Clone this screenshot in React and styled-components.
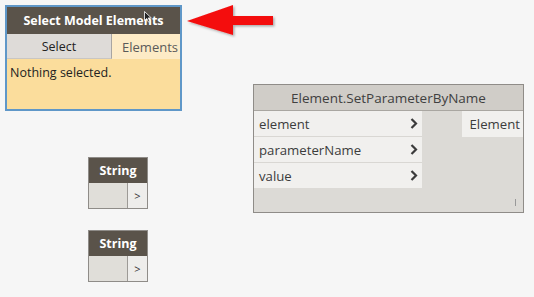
import React from "react";
import styled, { createGlobalStyle } from "styled-components";

const GlobalStyle = createGlobalStyle`
  html, body {
    margin: 0;
    padding: 0;
    background: #f6f6f6;
    font-family: "Open Sans", "Noto Sans", sans-serif;
  }
`;

// the workspace is a free canvas: nodes sit at their own coordinates
const Canvas = styled.div`
  position: relative;
  width: 534px;
  height: 297px;
  overflow: hidden;
  background: #f6f6f6;
`;

const Node = styled.div`
  position: absolute;
  left: ${(p) => p.x}px;
  top: ${(p) => p.y}px;
  width: ${(p) => p.w}px;
  display: flex;
  flex-direction: column;
  box-sizing: border-box;
  border: ${(p) => (p.selected ? "2px solid #5f97c8" : "1px solid #8f8c88")};
`;

const Header = styled.div`
  height: ${(p) => p.h || 26}px;
  display: flex;
  align-items: center;
  justify-content: center;
  background: ${(p) => (p.light ? "#d0cdc8" : "#5a534a")};
  color: ${(p) => (p.light ? "#404040" : "#ffffff")};
  font-weight: ${(p) => (p.light ? 400 : 700)};
  font-size: ${(p) => (p.light ? 13.5 : 12.5)}px;
  border-bottom: ${(p) => (p.light ? "1px solid #a9a6a1" : "none")};
  white-space: nowrap;
`;

/* ---- Select Model Elements ---- */

const ButtonRow = styled.div`
  display: flex;
  height: 25px;
`;

const SelectButton = styled.div`
  width: 105px;
  display: flex;
  align-items: center;
  justify-content: center;
  background: #dedbd8;
  border-right: 1px solid #a8a5a2;
  border-bottom: 1px solid #c9c6c2;
  font-size: 12.5px;
  color: #222;
  box-sizing: border-box;
`;

const OutLabel = styled.div`
  flex: 1;
  display: flex;
  align-items: center;
  justify-content: flex-end;
  padding-right: 2px;
  background: #fdebc6;
  color: #5a5a5a;
  font-size: 13px;
`;

const YellowBody = styled.div`
  height: 50px;
  background: #fbdd9c;
  padding: 5px 3px;
  box-sizing: border-box;
  font-size: 12.5px;
  color: #222;
`;

const Cursor = styled.svg`
  position: absolute;
  left: 144px;
  top: 11px;
`;

/* ---- Element.SetParameterByName ---- */

const NodeBody = styled.div`
  display: flex;
  background: #dcdad6;
  height: 101px;
  position: relative;
`;

const Inputs = styled.div`
  width: 168px;
  display: flex;
  flex-direction: column;
`;

const Port = styled.div`
  height: 25px;
  display: flex;
  align-items: center;
  justify-content: space-between;
  padding: 0 4px 0 5px;
  background: #f1f0ee;
  border-bottom: ${(p) => (p.last ? "none" : "1px solid #d9d7d3")};
  font-size: 13.2px;
  color: #3c3c3c;
`;

const Outputs = styled.div`
  flex: 1;
  display: flex;
  justify-content: flex-end;
  align-items: flex-start;
`;

const OutPort = styled.div`
  width: 61px;
  height: 26px;
  display: flex;
  align-items: center;
  justify-content: flex-end;
  padding-right: 3px;
  background: #f1f0ee;
  font-size: 13.2px;
  color: #3c3c3c;
  box-sizing: border-box;
`;

const Tick = styled.div`
  position: absolute;
  right: 7px;
  bottom: 6px;
  width: 1px;
  height: 7px;
  background: #999;
`;

/* ---- String nodes ---- */

const StringRow = styled.div`
  display: flex;
  height: 25px;
  background: #dcdad6;
`;

const StringInput = styled.div`
  flex: 1;
  background: #e0ded9;
  border-right: 1px solid #9d9a96;
`;

const StringOut = styled.div`
  width: 19px;
  display: flex;
  align-items: center;
  justify-content: center;
  background: #eeedeb;
  font-size: 11px;
  color: #333;
`;

const Arrow = styled.svg`
  position: absolute;
  left: 186px;
  top: 4px;
`;

const Chevron = () => (
  <svg width="8" height="11" viewBox="0 0 8 11">
    <path d="M1.5 1 L6 5.5 L1.5 10" fill="none" stroke="#3b3b3b" strokeWidth="2.2" />
  </svg>
);

const StringNode = ({ x, y }) => (
  <Node x={x} y={y} w={60}>
    <Header h={25}>String</Header>
    <StringRow>
      <StringInput />
      <StringOut>&gt;</StringOut>
    </StringRow>
  </Node>
);

const ports = ["element", "parameterName", "value"];

export default function App() {
  return (
    <>
      <GlobalStyle />
      <Canvas>
        <Node x={5} y={5} w={177} selected>
          <Header h={27}>Select Model Elements</Header>
          <ButtonRow>
            <SelectButton>Select</SelectButton>
            <OutLabel>Elements</OutLabel>
          </ButtonRow>
          <YellowBody>Nothing selected.</YellowBody>
        </Node>

        <Cursor width="8" height="12" viewBox="0 0 8 12">
          <path d="M0.5 0.5 L0.5 9.5 L2.8 7.4 L4.4 11 L5.8 10.4 L4.3 6.9 L7.3 6.9 Z" fill="#222" stroke="#fff" strokeWidth="0.8" />
        </Cursor>

        <Arrow width="92" height="34" viewBox="0 0 92 34">
          <defs>
            <filter id="sh" x="-10%" y="-20%" width="130%" height="150%">
              <feDropShadow dx="1.5" dy="1.5" stdDeviation="1" floodColor="#000" floodOpacity="0.3" />
            </filter>
          </defs>
          <path
            d="M1 17 L47 1 L47 12 L87 12 L87 21 L47 21 L47 31 Z"
            fill="#f40d0d"
            filter="url(#sh)"
          />
        </Arrow>

        <Node x={253} y={84} w={271}>
          <Header light h={25}>Element.SetParameterByName</Header>
          <NodeBody>
            <Inputs>
              {ports.map((name, i) => (
                <Port key={name} last={i === ports.length - 1}>
                  {name}
                  <Chevron />
                </Port>
              ))}
            </Inputs>
            <Outputs>
              <OutPort>Element</OutPort>
            </Outputs>
            <Tick />
          </NodeBody>
        </Node>

        <StringNode x={88} y={157} />
        <StringNode x={88} y={230} />
      </Canvas>
    </>
  );
}
